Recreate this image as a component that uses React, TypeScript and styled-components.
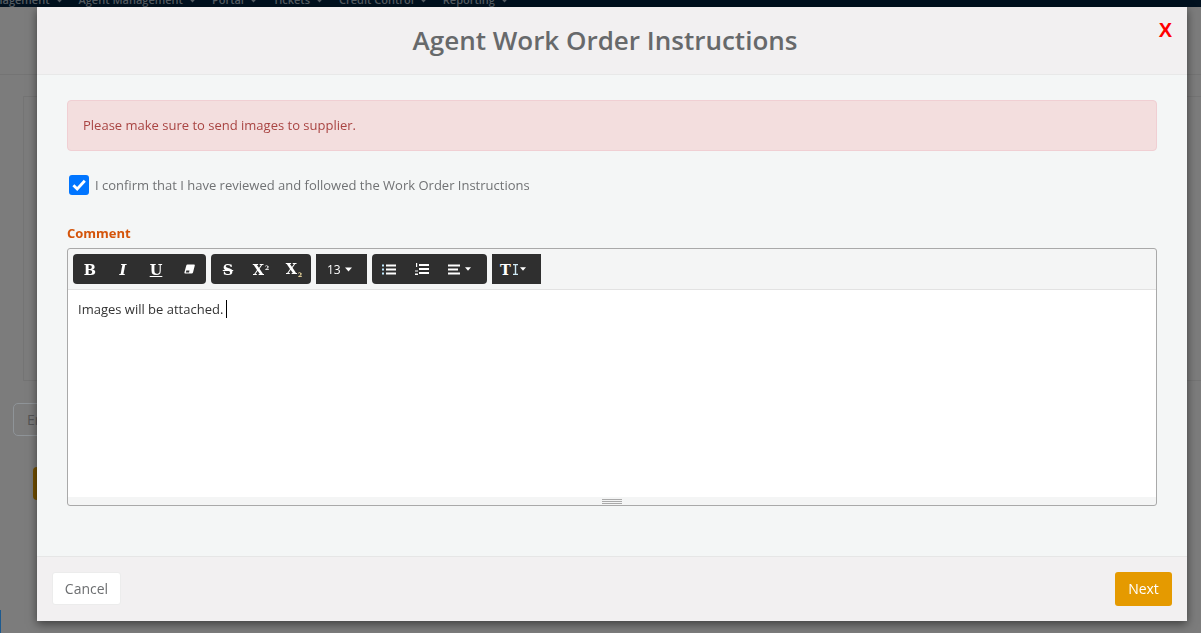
import React from 'react';
import styled, { createGlobalStyle } from 'styled-components';

const GlobalStyle = createGlobalStyle`
  html, body {
    margin: 0;
    height: 100%;
    overflow: hidden;
    background: #7c7c7c;
    font-family: 'Open Sans', sans-serif;
  }
  * { box-sizing: border-box; }
`;

const Caret = ({ size = 7 }: { size?: number }) => (
  <svg width={size} height={Math.ceil(size * 0.6)} viewBox="0 0 7 4">
    <path d="M0 0h7L3.500 4z" fill="currentColor" />
  </svg>
);

const NAV_ITEMS = ['Management', 'Agent Management', 'Portal', 'Tickets', 'Credit Control', 'Reporting'];

const App = () => {
  return (
    <>
      <GlobalStyle />
      <St.Page>
        <St.Nav>
          {NAV_ITEMS.map((item) => (
            <St.NavItem key={item}>
              {item}
              <Caret size={9} />
            </St.NavItem>
          ))}
        </St.Nav>
        <St.SubBar />
        <St.Content>
          <St.BackCard />
          <St.BackInput>En</St.BackInput>
          <St.BackButton />
        </St.Content>
        <St.BlueEdge />
      </St.Page>

      <St.Modal>
        <St.Header>
          <St.Title>Agent Work Order Instructions</St.Title>
          <St.Close>X</St.Close>
        </St.Header>
        <St.Body>
          <St.Alert>Please make sure to send images to supplier.</St.Alert>
          <St.Confirm>
            <St.Checkbox>
              <svg width="14" height="12" viewBox="0 0 14 12">
                <path d="M1.400 6.200l3.800 3.800L12.800 1.800" fill="none" stroke="#fff" strokeWidth="2.800" />
              </svg>
            </St.Checkbox>
            I confirm that I have reviewed and followed the Work Order Instructions
          </St.Confirm>
          <St.Label>Comment</St.Label>
          <St.Editor>
            <St.Toolbar>
              <St.Group>
                <St.Tool $serif><b>B</b></St.Tool>
                <St.Tool $serif><b><i>I</i></b></St.Tool>
                <St.Tool $serif><b><u>U</u></b></St.Tool>
                <St.Tool>
                  <svg width="11" height="10" viewBox="0 0 11 10">
                    <path d="M3.500 0.500h6.500q1 0 .8 1L9 8.500q-.3 1-1.300 1H1.200q-1 0-.8-1L2.300 1.500q.2-1 1.200-1z" fill="#fff" />
                    <path d="M2.300 6.600h3.200L5 8.400H1.900z" fill="#2f2f2f" />
                  </svg>
                </St.Tool>
              </St.Group>
              <St.Group>
                <St.Tool $serif><b><s>S</s></b></St.Tool>
                <St.Tool $serif><b>X<St.Mark $top>2</St.Mark></b></St.Tool>
                <St.Tool $serif><b>X<St.Mark>2</St.Mark></b></St.Tool>
              </St.Group>
              <St.SizeGroup>
                <St.FontSize>13</St.FontSize>
                <Caret />
              </St.SizeGroup>
              <St.Group>
                <St.Tool>
                  <St.ListIcon width="14" height="11" viewBox="0 0 14 11">
                    <path d="M0 .5h2v2H0zM0 4.500h2v2H0zM0 8.500h2v2H0z" fill="#bfeaff" />
                    <path d="M4 .5h10v2H4zM4 4.500h10v2H4zM4 8.500h10v2H4z" fill="#fff" />
                  </St.ListIcon>
                </St.Tool>
                <St.Tool>
                  <svg width="14" height="12" viewBox="0 0 14 12">
                    <path d="M1 0h1.200v4H1zM0 7.500h3v1H0zM0 10.500h3V12H0z" fill="#fff" />
                    <path d="M4 1h10v2H4zM4 5h10v2H4zM4 9h10v2H4z" fill="#fff" />
                  </svg>
                </St.Tool>
                <St.Tool $width={48} $pad={9.5}>
                  <svg width="12" height="11" viewBox="0 0 12 11">
                    <path d="M0 .5h12v2H0zM0 4.500h10v2H0zM0 8.500h12v2H0z" fill="#fff" />
                  </svg>
                  <St.AlignCaret><Caret size={6} /></St.AlignCaret>
                </St.Tool>
              </St.Group>
              <St.HeightGroup>
                <St.Tool $serif $width={49} $pad={8}>
                  <b>T</b>
                  <svg width="5" height="11" viewBox="0 0 5 11">
                    <path d="M0 0h5v1.200H3.200v8.600H5V11H0V9.800h1.800V1.200H0z" fill="#cfeaf5" />
                  </svg>
                  <Caret size={6} />
                </St.Tool>
              </St.HeightGroup>
            </St.Toolbar>
            <St.EditArea>
              Images will be attached.
              <St.Cursor />
            </St.EditArea>
            <St.Resizer>
              <St.Grip />
            </St.Resizer>
          </St.Editor>
        </St.Body>
        <St.Footer>
          <St.CancelButton>Cancel</St.CancelButton>
          <St.NextButton>Next</St.NextButton>
        </St.Footer>
      </St.Modal>
    </>
  );
};

export default App;

const St = {
  Page: styled.div`
    height: 100vh;
    position: relative;
    overflow: hidden;
    background: #7c7c7c;
    display: flex;
    flex-direction: column;
  `,

  Nav: styled.nav`
    height: 7px;
    flex-shrink: 0;
    background: #01111f;
    display: flex;
    gap: 15px;
    margin-left: -21px;
    overflow: hidden;
  `,

  NavItem: styled.span`
    display: flex;
    align-items: center;
    gap: 5px;
    font-size: 11px;
    font-weight: 600;
    line-height: 14px;
    color: #555c62;
    white-space: nowrap;
    flex-shrink: 0;
    height: 14px;
    margin-top: -7px;
  `,

  SubBar: styled.div`
    height: 68px;
    flex-shrink: 0;
    border-bottom: 1px solid #747474;
  `,

  Content: styled.div`
    display: flex;
    flex-direction: column;
    align-items: flex-start;
    padding-left: 13px;
  `,

  BackCard: styled.div`
    width: 100%;
    height: 285px;
    margin: 21px 0 0 10px;
    border: 1px solid #747474;
  `,

  BackInput: styled.div`
    width: 60px;
    height: 33px;
    margin-top: 22px;
    padding-left: 13px;
    border: 1px solid #8f9498;
    border-radius: 5px;
    font-size: 14px;
    line-height: 31px;
    color: #555;
  `,

  BackButton: styled.div`
    width: 40px;
    height: 33px;
    margin: 31px 0 0 20px;
    background: #745000;
    border-radius: 4px;
  `,

  BlueEdge: styled.div`
    position: absolute;
    left: 0;
    top: 610px;
    width: 1px;
    height: 23px;
    background: #1d5a8f;
  `,

  Modal: styled.div`
    position: fixed;
    left: 37px;
    top: 7px;
    width: 1150px;
    height: 614px;
    display: flex;
    flex-direction: column;
    background: #f4f6f6;
    box-shadow: 0 3px 9px rgba(0, 0, 0, 0.5);
  `,

  Header: styled.header`
    position: relative;
    height: 68px;
    flex-shrink: 0;
    display: flex;
    align-items: center;
    justify-content: center;
    padding-right: 14px;
    background: #f2f0f1;
    border-bottom: 1px solid #e8e8e8;
  `,

  Title: styled.h4`
    margin: 0 0 1px;
    font-size: 26px;
    font-weight: 600;
    line-height: 36px;
    color: #67696b;
  `,

  Close: styled.span`
    position: absolute;
    top: 11px;
    right: 15px;
    font-family: 'Liberation Sans', sans-serif;
    font-size: 20px;
    font-weight: 700;
    line-height: 24px;
    color: #ff0000;
  `,

  Body: styled.div`
    flex: 1;
    padding: 25px 30px 0;
  `,

  Alert: styled.div`
    height: 51px;
    padding: 0 15px 2px;
    display: flex;
    align-items: center;
    font-size: 13px;
    color: #a94442;
    background: #f3dede;
    border: 1px solid #f0cfd3;
    border-radius: 4px;
  `,

  Confirm: styled.label`
    display: flex;
    align-items: center;
    gap: 6px;
    height: 20px;
    margin: 24px 0 0 2px;
    font-size: 13px;
    color: #707274;
  `,

  Checkbox: styled.span`
    width: 20px;
    height: 20px;
    display: flex;
    align-items: center;
    justify-content: center;
    background: #0075ff;
    border-radius: 3px;
  `,

  Label: styled.div`
    margin-top: 28px;
    font-size: 13px;
    font-weight: 700;
    line-height: 20px;
    color: #d4540a;
  `,

  Editor: styled.div`
    margin-top: 5px;
    height: 258px;
    display: flex;
    flex-direction: column;
    background: #f4f5f5;
    border: 1px solid #a9a9a9;
    border-radius: 3px;
  `,

  Toolbar: styled.div`
    height: 41px;
    flex-shrink: 0;
    display: flex;
    align-items: flex-start;
    gap: 5px;
    padding: 5px 0 0 5px;
    border-bottom: 1px solid #e2e2e2;
  `,

  Group: styled.div`
    height: 30px;
    display: flex;
    align-items: center;
    padding: 0 0.5px;
    background: #2f2f2f;
    border-radius: 4px;
  `,

  SizeGroup: styled.div`
    width: 51px;
    height: 30px;
    display: flex;
    align-items: center;
    gap: 4px;
    padding-left: 11px;
    color: #fff;
    background: #2f2f2f;
  `,

  HeightGroup: styled.div`
    width: 49px;
    height: 30px;
    background: #2f2f2f;
  `,

  Tool: styled.span<{ $serif?: boolean; $width?: number; $pad?: number }>`
    width: ${({ $width }) => $width ?? 33}px;
    height: 30px;
    display: flex;
    align-items: center;
    justify-content: ${({ $pad }) => ($pad ? 'flex-start' : 'center')};
    padding-left: ${({ $pad }) => $pad ?? 0}px;
    gap: 2px;
    color: #fff;
    font-family: ${({ $serif }) => ($serif ? "'DejaVu Serif', serif" : "'Open Sans', sans-serif")};
    font-size: 14.500px;
  `,

  ListIcon: styled.svg`
    margin-left: -1px;
  `,

  AlignCaret: styled.span`
    display: flex;
    margin-left: 3px;
  `,

  Mark: styled.span<{ $top?: boolean }>`
    margin-left: 1px;
    font-size: 6px;
    vertical-align: ${({ $top }) => ($top ? '5px' : '-3px')};
    color: ${({ $top }) => ($top ? '#fff' : '#ffe9a8')};
  `,

  FontSize: styled.span`
    font-size: 12px;
    color: #fff;
  `,

  EditArea: styled.div`
    flex: 1;
    padding: 10px 10px;
    font-size: 13px;
    line-height: 18px;
    color: #333;
    background: #fff;
  `,

  Cursor: styled.span`
    display: inline-block;
    width: 1px;
    height: 18px;
    margin-left: 3px;
    vertical-align: top;
    background: #000;
  `,

  Resizer: styled.div`
    height: 8px;
    flex-shrink: 0;
    display: flex;
    align-items: center;
    justify-content: center;
  `,

  Grip: styled.div`
    width: 20px;
    height: 5px;
    border-top: 1px solid #a9a9a9;
    border-bottom: 1px solid #a9a9a9;
    background: linear-gradient(#a9a9a9, #a9a9a9) center / 100% 1px no-repeat;
  `,

  Footer: styled.footer`
    height: 65px;
    flex-shrink: 0;
    display: flex;
    align-items: flex-start;
    justify-content: space-between;
    padding: 15px 15px 0;
    background: #f2f0f1;
    border-top: 1px solid #e6e6e6;
  `,

  CancelButton: styled.button`
    width: 69px;
    height: 33px;
    padding: 0;
    font: 14px 'Open Sans', sans-serif;
    color: #6c6e70;
    background: #fff;
    border: 1px solid #ececec;
    border-radius: 3px;
  `,

  NextButton: styled.button`
    width: 57px;
    height: 34px;
    padding: 0 0 1px;
    font: 500 14px 'Open Sans', sans-serif;
    color: #fff;
    background: #e59a00;
    border: none;
    border-radius: 3px;
  `,
};
